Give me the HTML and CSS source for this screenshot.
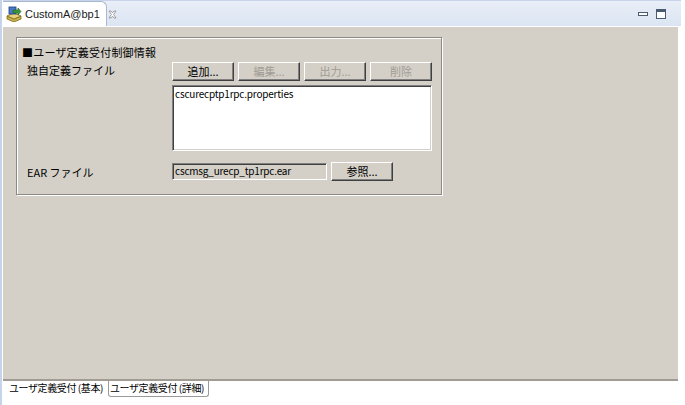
FILE: index.html
```html
<!DOCTYPE html>
<html lang="ja">
<head>
<meta charset="utf-8">
<link rel="stylesheet" href="styles.css">
</head>
<body>
<div class="window">
  <div class="tabbar">
    <div class="tab active">
      <svg class="tab-icon" width="16" height="16" viewBox="0 0 16 16">
        <path d="M1 10 L8 13 L15 10 L15 13 L8 16 L1 13 Z" fill="#c9b24a" stroke="#7d6a1c" stroke-width="0.8"/>
        <path d="M1 10 L8 7 L15 10 L8 13 Z" fill="#e6d27a" stroke="#7d6a1c" stroke-width="0.8"/>
        <rect x="3" y="1" width="7" height="7" fill="#4a78c8" stroke="#1f3f80" stroke-width="0.8"/>
        <path d="M7 4 L12 4 L12 2 L15 5.5 L12 9 L12 7 L7 7 Z" fill="#3a9a3a" stroke="#1d5a1d" stroke-width="0.6"/>
      </svg>
      <span class="tab-title">CustomA@bp1</span>
      <svg class="tab-close" width="9" height="9" viewBox="0 0 9 9">
        <path d="M1 1 L3 1 L4.5 2.8 L6 1 L8 1 L5.6 4.5 L8 8 L6 8 L4.5 6.2 L3 8 L1 8 L3.4 4.5 Z" fill="#fff" stroke="#8a8a8a" stroke-width="0.8"/>
      </svg>
    </div>
    <div class="spacer"></div>
    <div class="win-ctrls">
      <svg width="12" height="10" viewBox="0 0 12 10"><rect x="1.5" y="3.5" width="9" height="3" fill="#fff" stroke="#4a5a70"/></svg>
      <svg width="12" height="12" viewBox="0 0 12 12"><rect x="1.5" y="1.5" width="9" height="9" fill="#fff" stroke="#4a5a70"/><rect x="2" y="2" width="8" height="2" fill="#4a5a70"/></svg>
    </div>
  </div>
  <div class="body">
    <div class="content">
      <div class="group">
        <div class="group-title">■ユーザ定義受付制御情報</div>
        <div class="row">
          <div class="label">独自定義ファイル</div>
          <div class="btns">
            <button class="btn">追加...</button>
            <button class="btn disabled">編集...</button>
            <button class="btn disabled">出力...</button>
            <button class="btn disabled">削除</button>
          </div>
        </div>
        <div class="list">cscurecptp1rpc.properties</div>
        <div class="row ear">
          <div class="label">EAR ファイル</div>
          <div class="field">cscmsg_urecp_tp1rpc.ear</div>
          <button class="btn ref">参照...</button>
        </div>
      </div>
    </div>
    <div class="bottom-tabs">
      <div class="btab sel">ユーザ定義受付 (基本)</div>
      <div class="btab">ユーザ定義受付 (詳細)</div>
    </div>
  </div>
</div>
</body>
</html>
```

FILE: styles.css
```css
* { box-sizing: border-box; }
html, body { margin: 0; padding: 0; }
body {
  width: 685px;
  height: 405px;
  background: #ffffff;
  font-family: "Noto Sans CJK JP", "Liberation Sans", sans-serif;
  font-size: 11px;
  color: #000;
  overflow: hidden;
}
.window {
  width: 685px;
  height: 405px;
  display: flex;
  flex-direction: column;
  border-left: 2px solid #c5d4ea;
  padding-left: 1px;
}
.tabbar {
  height: 27px;
  display: flex;
  align-items: flex-end;
  background: linear-gradient(#e9eef7, #dbe5f3);
  border-top: 1px solid #c6d3e8;
  margin-right: 4px;
  border-bottom: 1px solid #ffffff;
}
.tab {
  height: 25px;
  width: 104px;
  display: flex;
  align-items: center;
  padding-left: 3px;
  gap: 3px;
  background: #ffffff;
  border: 1px solid #a8b8d0;
  border-bottom: none;
  border-left: none;
  border-radius: 0 6px 0 0;
}
.tab-icon { flex: none; }
.tab-title {
  font-family: "Liberation Sans", "DejaVu Sans", sans-serif;
  font-size: 11px;
  color: #1a1a1a;
}
.tab-close {
  margin-left: 5px;
  flex: none;
}
.spacer { flex: 1; }
.win-ctrls {
  display: flex;
  gap: 6px;
  align-items: center;
  align-self: center;
  padding-right: 14px;
}
.body {
  flex: 1;
  display: flex;
  flex-direction: column;
  margin-right: 7px;
}
.content {
  height: 354px;
  background: #d4d0c8;
  padding: 10px 0 0 13px;
  border-bottom: 2px solid #a09c94;
}
.group {
  width: 426px;
  height: 158px;
  border: 1px solid #8c8a84;
  box-shadow: inset 1px 1px 0 #ffffff, 1px 1px 0 #ffffff;
  padding: 7px 0 0 5px;
}
.group-title {
  height: 14px;
  line-height: 14px;
  letter-spacing: 0.2px;
}
.row {
  display: flex;
  align-items: center;
}
.label {
  width: 150px;
  padding-left: 5px;
  line-height: 14px;
}
.btns {
  display: flex;
  gap: 4px;
  margin-top: 3px;
}
.btn {
  width: 62px;
  height: 19px;
  padding: 0;
  font-family: "Noto Sans CJK JP", "Liberation Sans", sans-serif;
  font-size: 11px;
  line-height: 15px;
  color: #000;
  background: #d4d0c8;
  border: 1px solid;
  border-color: #ffffff #404040 #404040 #ffffff;
  box-shadow: inset -1px -1px 0 #808080;
}
.btn.disabled {
  color: #a09c94;
}
.list {
  margin: 4px 0 0 150px;
  width: 260px;
  height: 66px;
  background: #ffffff;
  border: 1px solid;
  border-color: #808080 #ffffff #ffffff #808080;
  box-shadow: inset 1px 1px 0 #404040, inset -1px -1px 0 #d4d0c8;
  padding: 1px 2px;
  font-size: 10px;
  line-height: 13px;
  letter-spacing: -0.2px;
}
.row.ear {
  margin-top: 11px;
}
.field {
  width: 155px;
  height: 17px;
  background: #d4d0c8;
  border: 1px solid;
  border-color: #808080 #ffffff #ffffff #808080;
  box-shadow: inset 1px 1px 0 #404040;
  padding: 0 2px;
  font-size: 10px;
  line-height: 14px;
  letter-spacing: -0.2px;
}
.btn.ref {
  margin-left: 4px;
}
.bottom-tabs {
  display: flex;
  padding-left: 5px;
  height: 16px;
}
.btab {
  height: 16px;
  padding: 0 1px;
  line-height: 14px;
  font-size: 10px;
  letter-spacing: -0.4px;
  white-space: nowrap;
  background: #ffffff;
}
.btab.sel {
  width: 100px;
}
.btab:not(.sel) {
  border: 1px solid #9a9a9a;
  border-top: none;
  border-radius: 0 0 3px 3px;
  width: 101px;
}
```
